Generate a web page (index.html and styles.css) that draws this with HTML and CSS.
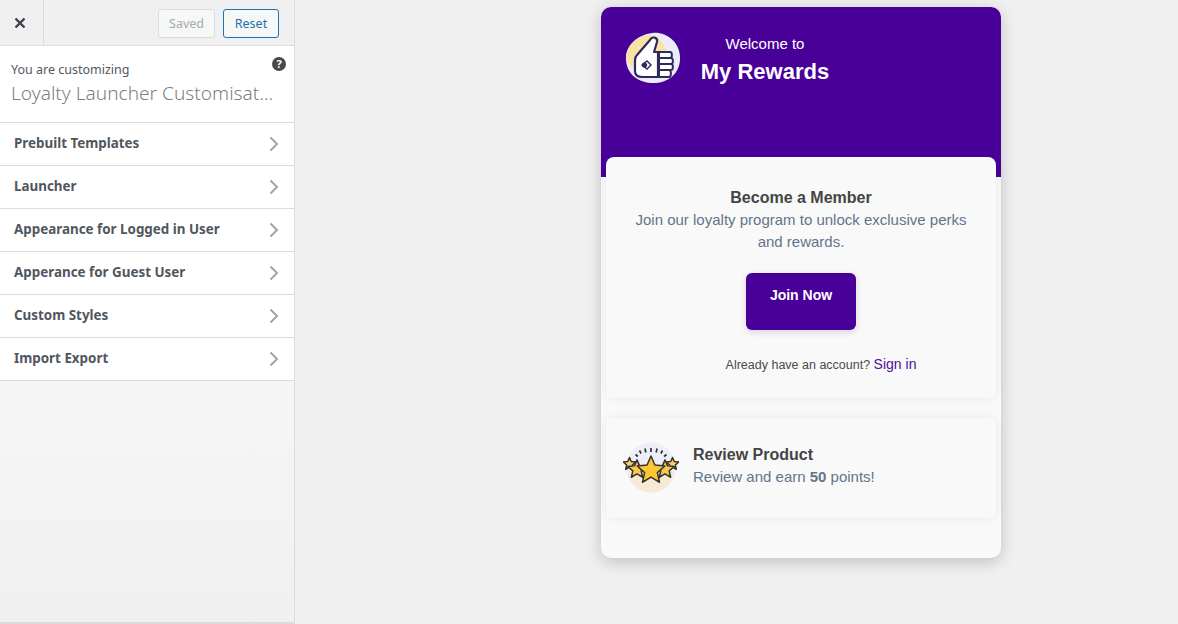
FILE: index.html
```html
<!DOCTYPE html>
<html>

	<head>
		<meta charset="UTF-8">
		<title>Customizer</title>
		<link rel="stylesheet" href="styles.css">
	</head>

	<body>
		<div class="sidebar">
			<header class="actions">
				<div class="close">
					<svg width="12" height="12" viewBox="0 0 12 12"><path d="M1.5 1.5l9 9M10.5 1.5l-9 9" stroke="#3c434a" stroke-width="2.4" fill="none"/></svg>
				</div>
				<div class="buttons">
					<span class="btn saved">Saved</span>
					<span class="btn reset">Reset</span>
				</div>
			</header>
			<div class="info">
				<span class="info-label">You are customizing</span>
				<span class="info-title">Loyalty Launcher Customisat…</span>
				<span class="help">?</span>
			</div>
			<ul class="menu">
				<li><span>Prebuilt Templates</span><svg width="10" height="16" viewBox="0 0 10 16"><path d="M1.5 1.5L8 8l-6.5 6.5" stroke="#a0a5aa" stroke-width="2" fill="none"/></svg></li>
				<li><span>Launcher</span><svg width="10" height="16" viewBox="0 0 10 16"><path d="M1.5 1.5L8 8l-6.5 6.5" stroke="#a0a5aa" stroke-width="2" fill="none"/></svg></li>
				<li><span>Appearance for Logged in User</span><svg width="10" height="16" viewBox="0 0 10 16"><path d="M1.5 1.5L8 8l-6.5 6.5" stroke="#a0a5aa" stroke-width="2" fill="none"/></svg></li>
				<li><span>Apperance for Guest User</span><svg width="10" height="16" viewBox="0 0 10 16"><path d="M1.5 1.5L8 8l-6.5 6.5" stroke="#a0a5aa" stroke-width="2" fill="none"/></svg></li>
				<li><span>Custom Styles</span><svg width="10" height="16" viewBox="0 0 10 16"><path d="M1.5 1.5L8 8l-6.5 6.5" stroke="#a0a5aa" stroke-width="2" fill="none"/></svg></li>
				<li><span>Import Export</span><svg width="10" height="16" viewBox="0 0 10 16"><path d="M1.5 1.5L8 8l-6.5 6.5" stroke="#a0a5aa" stroke-width="2" fill="none"/></svg></li>
			</ul>
			<div class="sidebar-foot"></div>
		</div>

		<div class="preview">
			<div class="panel">
				<div class="panel-top">
					<svg class="thumb" width="56" height="52" viewBox="0 0 56 52">
						<path d="M27 1c13-2 27 8 28 23 1 15-9 26-24 27C16 52 2 44 1 28 0 14 12 3 27 1z" fill="#ecebfa"/>
						<path d="M24 3c7 0 13 5 16 12l7 30-16 1c-10 0-20-6-30-18C0 15 11 4 24 3z" fill="#f8e2a8"/>
						<path d="M25 8c2-4 8-3 7 2l-3 10h4v25H17c-4 0-7-2-7-6V28c0-2 1-4 2-5z" fill="#fff" stroke="#2e2a5c" stroke-width="2.200" stroke-linejoin="round"/>
						<path d="M34 20h11c2.500 0 2.500 6 0 6H34zM34 26h12c2.500 0 2.500 6 0 6H34zM34 32h12c2.500 0 2.500 6 0 6H34zM34 38h10c2.500 0 2.500 7 0 7H34z" fill="#fff" stroke="#2e2a5c" stroke-width="2"/>
						<path d="M17 33l5-4 4 4-4 4z" fill="#fff" stroke="#2e2a5c" stroke-width="1.400"/>
						<circle cx="19.500" cy="33" r="2.600" fill="#2e2a5c"/>
					</svg>
					<div class="welcome">
						<span class="welcome-small">Welcome to</span>
						<span class="welcome-big">My Rewards</span>
					</div>
				</div>
				<div class="card member">
					<h3>Become a Member</h3>
					<p>Join our loyalty program to unlock exclusive perks and rewards.</p>
					<span class="join">Join Now</span>
					<div class="signin">Already have an account? <a>Sign in</a></div>
				</div>
				<div class="card review">
					<svg width="56" height="52" viewBox="0 0 56 52">
						<defs>
							<path id="star" d="M0-13L3.500-4.900L12.400-4L5.700 1.900L7.600 10.500L0 6L-7.600 10.500L-5.700 1.900L-12.400-4L-3.500-4.900Z" stroke="#333" stroke-width="1.500" stroke-linejoin="round" vector-effect="non-scaling-stroke"/>
						</defs>
						<circle cx="28" cy="25.500" r="25" fill="#eeeefb"/>
						<path d="M5 29h46c-2 13-11 21.500-23 21.500S7 42 5 29z" fill="#f6ead2"/>
						<path d="M28 6v4M22 6.500l.8 4M34 6.500l-.8 4M16.500 8.500l1.600 3M39.500 8.500l-1.600 3M12.500 12.500l2.400 2M43.500 12.500l-2.400 2" stroke="#333" stroke-width="1.700" fill="none"/>
						<use href="#star" transform="translate(6.500 22) scale(.5)" fill="#fbd060"/>
						<use href="#star" transform="translate(49.500 22) scale(.5)" fill="#fbd060"/>
						<use href="#star" transform="translate(14 27.500) scale(.74)" fill="#fbc850"/>
						<use href="#star" transform="translate(42 27.500) scale(.74)" fill="#fbc850"/>
						<use href="#star" transform="translate(28 28.500) scale(1.120)" fill="#fdc72f"/>
					</svg>
					<div class="review-text">
						<h4>Review Product</h4>
						<p>Review and earn <b>50</b> points!</p>
					</div>
				</div>
			</div>
		</div>
	</body>

</html>
```

FILE: styles.css
```css
html,
body {
	height: 100%;
}

body {
	margin: 0;
	display: flex;
	overflow: hidden;
	background-color: #f0f0f0;
	font-family: "Liberation Sans", Arial, sans-serif;
}

/* customizer sidebar */
.sidebar {
	width: 294px;
	height: 622px;
	flex-shrink: 0;
	display: flex;
	flex-direction: column;
	border-right: 1px solid #dcdcde;
	border-bottom: 2px solid #dcdcde;
	background-color: #f0f0f1;
	font-family: "Noto Sans", sans-serif;
	color: #50575e;
}

.actions {
	height: 45px;
	display: flex;
	justify-content: space-between;
	border-bottom: 1px solid #dcdcde;
}

.close {
	width: 40px;
	padding-right: 3px;
	display: flex;
	align-items: center;
	justify-content: center;
	border-right: 1px solid #dcdcde;
}

.buttons {
	display: flex;
	gap: 8px;
	padding: 9px 15px 0 0;
}

.btn {
	height: 27px;
	line-height: 28px;
	border-radius: 3px;
	border: 1px solid #2271b1;
	font-size: 12.500px;
	text-align: center;
}

.saved {
	width: 55px;
	border-color: #dcdcde;
	background-color: #f6f7f7;
	color: #a7aaad;
}

.reset {
	width: 54px;
	border-color: #2271b1;
	background-color: #f6f7f7;
	color: #2271b1;
}

.info {
	position: relative;
	height: 77px;
	padding: 15px 11px 0;
	box-sizing: border-box;
	background-color: #fff;
	border-bottom: 1px solid #dcdcde;
}

.info-label {
	display: block;
	font-size: 12.500px;
	line-height: 17px;
	color: #50575e;
}

.info-title {
	display: block;
	margin-top: 2px;
	font-size: 19.100px;
	line-height: 26px;
	font-weight: 300;
	color: #7b8085;
	white-space: nowrap;
}

.help {
	position: absolute;
	top: 11px;
	right: 8px;
	width: 14px;
	height: 14px;
	line-height: 14px;
	border-radius: 50%;
	background-color: #46494d;
	color: #fff;
	font-size: 11px;
	font-weight: 700;
	text-align: center;
}

.menu {
	margin: 0;
	padding: 0;
	list-style: none;
}

.menu li {
	height: 42px;
	display: flex;
	align-items: center;
	justify-content: space-between;
	padding: 0 15px 0 14px;
	background-color: #fff;
	border-bottom: 1px solid #dcdcde;
	font-size: 13.400px;
	font-weight: 700;
	color: #50575e;
}

.menu li span {
	margin-bottom: 3px;
}

.sidebar-foot {
	flex: 1;
	background: linear-gradient(#f6f6f6, #f0f0f0);
}

/* preview */
.preview {
	flex: 1;
	padding: 7px 0 0 306px;
}

.panel {
	width: 400px;
	height: 551px;
	position: relative;
	border-radius: 10px;
	background-color: #f9f9f9;
	box-shadow: 0 4px 16px rgba(0, 0, 0, 0.2);
}

.panel-top {
	height: 170px;
	box-sizing: border-box;
	display: flex;
	align-items: flex-start;
	padding: 25px 0 0 24px;
	border-radius: 10px 10px 0 0;
	background-color: #480099;
	color: #fff;
}

.welcome {
	width: 130px;
	margin-left: 19px;
	padding-top: 1px;
	display: flex;
	flex-direction: column;
	align-items: center;
	text-align: center;
}

.welcome-small {
	font-size: 15px;
	line-height: 22px;
}

.welcome-big {
	margin-top: 3px;
	font-size: 22px;
	line-height: 28px;
	font-weight: 700;
}

.card {
	margin: 0 5px;
	border-radius: 8px;
	background-color: #f9f9f9;
	box-shadow: 0 0 10px rgba(0, 0, 0, 0.07);
}

.member {
	height: 241px;
	box-sizing: border-box;
	margin-top: -20px;
	position: relative;
	padding: 31px 25px 0;
	text-align: center;
}

.member h3 {
	margin: 0;
	font-size: 16px;
	line-height: 20px;
	color: #444;
}

.member p {
	margin: 1px 0 0;
	font-size: 15px;
	line-height: 22px;
	color: #64748b;
}

.join {
	display: block;
	width: 110px;
	height: 57px;
	margin: 20px auto 0;
	padding-top: 14px;
	box-sizing: border-box;
	border-radius: 6px;
	background-color: #480099;
	color: #fff;
	font-size: 14px;
	line-height: 16px;
	font-weight: 700;
	box-shadow: 0 2px 6px rgba(60, 60, 120, 0.2);
}

.signin {
	margin-top: 24px;
	padding-left: 40px;
	font-size: 12.500px;
	line-height: 20px;
	color: #4b4b4b;
}

.signin a {
	font-size: 14px;
	color: #4a0f9f;
}

.review {
	height: 100px;
	margin-top: 20px;
	display: flex;
	align-items: center;
	gap: 14px;
	padding-left: 17px;
}

.review-text {
	margin-bottom: 4px;
}

.review h4 {
	margin: 0;
	font-size: 16px;
	line-height: 22px;
	color: #444;
}

.review p {
	margin: 0;
	font-size: 15px;
	line-height: 22px;
	color: #64748b;
}
```
